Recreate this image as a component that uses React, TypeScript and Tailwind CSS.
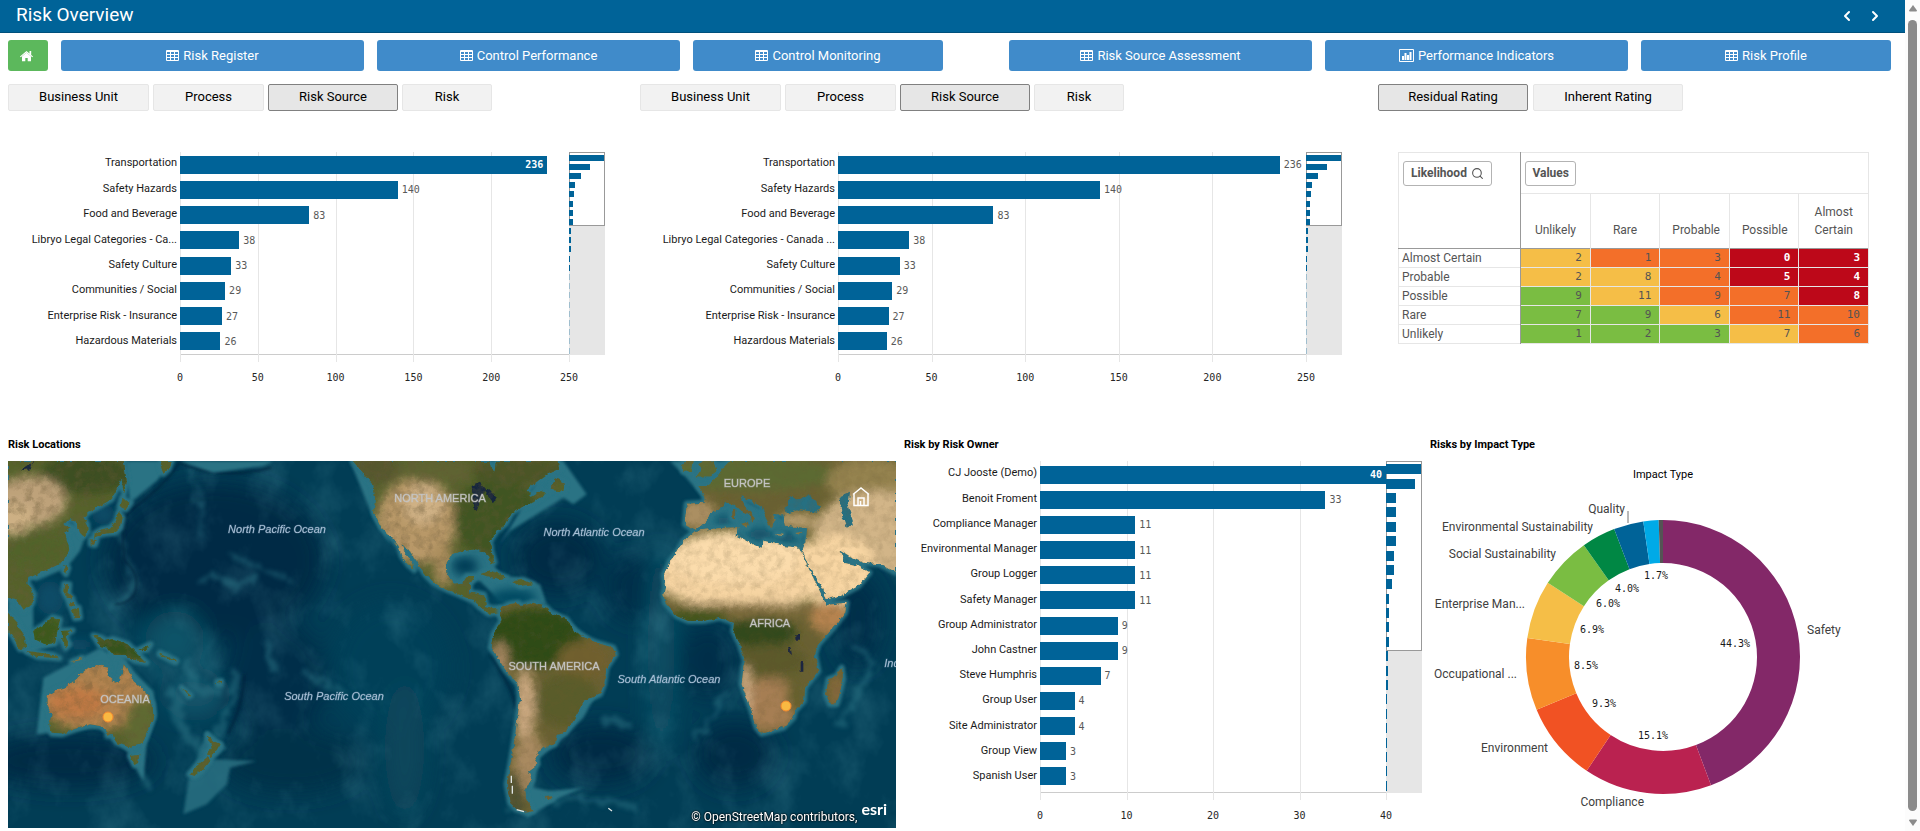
import { ReactNode } from "react";
import { ChevronLeft, ChevronRight, Search } from "lucide-react";

type Datum = { label: string; value: number };

const riskSources: Datum[] = [
  { label: "Transportation", value: 236 },
  { label: "Safety Hazards", value: 140 },
  { label: "Food and Beverage", value: 83 },
  { label: "Libryo Legal Categories - Canada ...", value: 38 },
  { label: "Safety Culture", value: 33 },
  { label: "Communities / Social", value: 29 },
  { label: "Enterprise Risk - Insurance", value: 27 },
  { label: "Hazardous Materials", value: 26 },
];

const riskSourcesShort = riskSources.map((d) =>
  d.value === 38 ? { ...d, label: "Libryo Legal Categories - Ca..." } : d
);

const riskSourceTail = [12, 11, 11, 5, 5, 1, 1, 1, 1, 1, 1, 1, 1, 1];

const owners: Datum[] = [
  { label: "CJ Jooste (Demo)", value: 40 },
  { label: "Benoit Froment", value: 33 },
  { label: "Compliance Manager", value: 11 },
  { label: "Environmental Manager", value: 11 },
  { label: "Group Logger", value: 11 },
  { label: "Safety Manager", value: 11 },
  { label: "Group Administrator", value: 9 },
  { label: "John Castner", value: 9 },
  { label: "Steve Humphris", value: 7 },
  { label: "Group User", value: 4 },
  { label: "Site Administrator", value: 4 },
  { label: "Group View", value: 3 },
  { label: "Spanish User", value: 3 },
];

const ownerTail = [2, 2, 2, 1, 1, 1, 1, 1, 1, 1];

const matrixColumns = ["Unlikely", "Rare", "Probable", "Possible", "Almost Certain"];

const green = "bg-[#7abd42]";
const yellow = "bg-[#f5be47]";
const orange = "bg-[#f36f29]";
const red = "bg-[#bd0819] font-bold text-white";

const matrixRows: { name: string; cells: [number, string][] }[] = [
  { name: "Almost Certain", cells: [[2, yellow], [1, orange], [3, orange], [0, red], [3, red]] },
  { name: "Probable", cells: [[2, yellow], [8, yellow], [4, orange], [5, red], [4, red]] },
  { name: "Possible", cells: [[9, green], [11, yellow], [9, orange], [7, orange], [8, red]] },
  { name: "Rare", cells: [[7, green], [9, green], [6, yellow], [11, orange], [10, orange]] },
  { name: "Unlikely", cells: [[1, green], [2, green], [3, green], [7, yellow], [6, orange]] },
];

const slices = [
  { share: 44.3, color: "#832868" },
  { share: 15.1, color: "#ba2250" },
  { share: 9.3, color: "#f15223" },
  { share: 8.5, color: "#f78e2a" },
  { share: 6.9, color: "#f5be47" },
  { share: 6.1, color: "#7abd42" },
  { share: 4, color: "#008744" },
  { share: 3.5, color: "#006398" },
  { share: 1.8, color: "#00aae7" },
  { share: 0.5, color: "#545454" },
];

function TableIcon() {
  return (
    <svg viewBox="0 0 13 12" className="h-3 w-[13px]" fill="currentColor" aria-hidden="true">
      <path
        fillRule="evenodd"
        d="M1 0h11a1 1 0 0 1 1 1v9a1 1 0 0 1-1 1H1a1 1 0 0 1-1-1V1a1 1 0 0 1 1-1zM1 2v2h3V2zm4 0v2h3V2zm4 0v2h3V2zM1 5v2h3V5zm4 0v2h3V5zm4 0v2h3V5zM1 8v2h3V8zm4 0v2h3V8zm4 0v2h3V8z"
      />
    </svg>
  );
}

function ChartIcon() {
  return (
    <svg viewBox="0 0 15 13" className="h-[13px] w-[15px]" fill="currentColor" aria-hidden="true">
      <path
        fillRule="evenodd"
        d="M1 0h13a1 1 0 0 1 1 1v11a1 1 0 0 1-1 1H1a1 1 0 0 1-1-1V1a1 1 0 0 1 1-1zM1 1v11h13V1zM3 7h2v4H3zM5.500 4h2v7h-2zM8 6h2v5H8zM10.500 3h2v8h-2z"
      />
    </svg>
  );
}

function HomeIcon() {
  return (
    <svg viewBox="0 0 13 12" className="h-3 w-[13px]" fill="currentColor" aria-hidden="true">
      <path d="M6.500 1 13 6.500l-.7.8L6.500 2.500.7 7.300 0 6.500zM9.500 1h1.700v4l-1.700-1.500zM6.500 2.800 11 6.500v4.800H7.700V8H5.300v3.300H2V6.500z" />
    </svg>
  );
}

function NavButton({ icon, children }: { icon?: ReactNode; children: ReactNode }) {
  return (
    <button
      type="button"
      className="flex h-[31px] items-center justify-center gap-1 rounded-[3px] bg-[#408bca] text-[13px] text-white hover:bg-[#3276b1]"
    >
      {icon ?? <TableIcon />}
      <span>{children}</span>
    </button>
  );
}

function Tab({ width, active, children }: { width: string; active?: boolean; children: ReactNode }) {
  return (
    <button
      type="button"
      aria-pressed={!!active}
      className={`h-[27px] rounded-[2px] border pb-0.5 text-[13px] text-black ${width} ${
        active ? "border-[#808080] bg-[#e6e6e6]" : "border-[#e6e6e6] bg-[#f2f2f2]"
      }`}
    >
      {children}
    </button>
  );
}

function DimensionTabs() {
  return (
    <div className="flex gap-1">
      <Tab width="w-[141px]">Business Unit</Tab>
      <Tab width="w-[111px]">Process</Tab>
      <Tab width="w-[130px]" active>
        Risk Source
      </Tab>
      <Tab width="w-[90px]">Risk</Tab>
    </div>
  );
}

function BarChart({
  data,
  tail,
  max,
  step,
  columns,
  height,
  rowsPadding = "",
  windowHeight,
  miniBar,
  insideFrom,
}: {
  data: Datum[];
  tail: number[];
  max: number;
  step: number;
  columns: string;
  height: string;
  rowsPadding?: string;
  windowHeight: string;
  miniBar: string;
  insideFrom: number;
}) {
  const ticks = Array.from({ length: max / step + 1 }, (_, i) => i * step);
  const overview = [...data.map((d) => d.value), ...tail];
  const top = data[0].value;

  return (
    <div className={`grid ${columns}`}>
      <div className={`flex flex-col ${height} ${rowsPadding}`}>
        {data.map((d) => (
          <div
            key={d.label}
            className="flex min-h-0 flex-1 items-center justify-end pr-[3px] pb-0.5 text-[11px] whitespace-nowrap text-[#1a1a1a]"
          >
            {d.label}
          </div>
        ))}
      </div>

      <div className={`relative border-b border-[#ccc] ${height}`}>
        <div className="absolute inset-x-0 top-0 -bottom-2 flex justify-between">
          {ticks.map((t) => (
            <div key={t} className="-mr-px w-px bg-[#e6e6e6]" />
          ))}
        </div>
        <div className={`relative flex h-full flex-col ${rowsPadding}`}>
          {data.map((d) => (
            <div key={d.label} className="flex min-h-0 flex-1 items-center gap-1">
              <div
                className="flex h-[18px] items-center justify-end bg-[#006398] pr-1 font-['DejaVu_Sans_Mono',monospace] text-[10px] font-bold text-white"
                style={{ width: `${(d.value / max) * 100}%` }}
              >
                {d.value >= insideFrom && d.value}
              </div>
              {d.value < insideFrom && (
                <span className="font-['DejaVu_Sans_Mono',monospace] text-[10px] text-[#595959]">
                  {d.value}
                </span>
              )}
            </div>
          ))}
        </div>
      </div>

      <div className={`relative flex flex-col bg-[#e6e6e6] ${height}`}>
        <div className={`absolute inset-x-0 top-0 border border-[#999] bg-white ${windowHeight}`} />
        <div className="relative flex h-full flex-col pt-px">
          {overview.map((v, i) => (
            <div key={i} className="flex min-h-0 flex-1 items-center">
              <div
                className={`min-w-px bg-[#006398] ${miniBar}`}
                style={{ width: `${(v / top) * 96}%`, opacity: v / top < 0.01 ? 0.3 : 1 }}
              />
            </div>
          ))}
        </div>
      </div>

      <div className="col-start-2 mt-[15px] flex justify-between font-['DejaVu_Sans_Mono',monospace] text-[10px] text-[#262626]">
        {ticks.map((t) => (
          <span key={t} className="flex w-0 justify-center">
            {t}
          </span>
        ))}
      </div>
    </div>
  );
}

function RatingMatrix() {
  return (
    <table className="w-full table-fixed border-collapse border border-[#e6e6e6] text-xs text-[#545454]">
      <colgroup>
        <col className="w-[26%]" />
        {matrixColumns.map((c) => (
          <col key={c} />
        ))}
      </colgroup>
      <thead>
        <tr className="h-[41px]">
          <td className="border-r border-r-[#999] pl-1">
            <button
              type="button"
              className="flex h-[25px] w-[89px] items-center justify-center gap-1 rounded-[3px] border border-[#b3b3b3] font-bold"
            >
              Likelihood
              <Search className="size-[13px]" />
            </button>
          </td>
          <td colSpan={5} className="border-b border-[#e6e6e6] pl-1">
            <button
              type="button"
              className="flex h-[25px] w-[51px] items-center justify-center rounded-[3px] border border-[#b3b3b3] font-bold"
            >
              Values
            </button>
          </td>
        </tr>
        <tr className="h-[55px] border-b border-b-[#999]">
          <td className="border-r border-r-[#999]" />
          {matrixColumns.map((c) => (
            <th key={c} scope="col" className="border-r border-r-[#e6e6e6] px-3 pb-[9px] align-bottom leading-[18px] font-normal">
              {c}
            </th>
          ))}
        </tr>
      </thead>
      <tbody>
        {matrixRows.map((row) => (
          <tr key={row.name} className="h-[19px] border-b border-[#e6e6e6]">
            <th scope="row" className="border-r border-r-[#999] p-0 pl-[3px] text-left leading-[18px] font-normal">
              {row.name}
            </th>
            {row.cells.map(([value, tone], i) => (
              <td
                key={i}
                className={`border-r border-[#e6e6e6] p-0 pr-2 text-right font-['DejaVu_Sans_Mono',monospace] text-[11px] leading-[18px] ${tone}`}
              >
                {value}
              </td>
            ))}
          </tr>
        ))}
      </tbody>
    </table>
  );
}

const asia =
  "M24 90H372L368 140 350 175 335 205 300 225 268 242 250 258 262 280 263 302 250 316 240 305 232 285 224 268 208 264 190 282 212 290 196 304 200 328 208 355 195 385 165 405 120 425 100 435 85 440 82 455 102 490 98 515 72 538 60 520 45 503 24 500Z";
const asiaIslands =
  "M372 95L380 150 372 190 366 150ZM485 90H515L505 115 490 128 482 105ZM365 200L392 215 378 235 358 228ZM355 243L368 260 362 290 345 305 318 308 300 312 282 320 284 308 305 295 330 290 348 270ZM272 325L290 328 285 342 272 340ZM195 402L205 410 198 430 190 420ZM192 458L208 460 205 490 218 502 200 500 190 480ZM215 535L236 530 240 560 225 562ZM205 510L222 515 225 528 210 525ZM24 548L50 575 75 620 78 650 60 655 40 620 24 595ZM78 660L120 665 160 672 178 682 110 677ZM100 600L130 582 158 558 180 565 172 600 165 637 135 640 105 625ZM185 600L218 598 202 608 197 618 208 640 197 652 187 630ZM215 692L245 680 240 688ZM280 613L305 620 318 630 340 624 385 640 410 665 440 695 405 690 380 675 345 675 325 650 300 645ZM415 657L452 640 440 657ZM480 665L530 690 526 694 478 670ZM545 770L572 793 566 796ZM652 752L664 750 662 760 653 760Z";
const australia =
  "M140 795L175 775 205 765 235 735 265 710 290 702 325 710 320 735 345 755 360 750 372 698 385 715 400 750 440 785 458 820 460 860 440 910 425 940 385 948 350 935 332 908 322 915 322 898 300 885 270 880 225 895 185 910 155 908 148 880 155 850 140 820ZM390 975L418 972 414 996 403 1002ZM622 910L640 930 662 940 650 960 632 978 620 965 635 950ZM622 978L628 990 605 1020 585 1035 568 1030 590 1005Z";
const northAmerica =
  "M1058 90L1085 120 1120 160 1125 200 1122 245 1145 290 1180 325 1196 345 1205 375 1225 402 1243 417 1236 396 1216 368 1204 343 1225 355 1250 390 1275 430 1300 455 1345 478 1380 492 1420 510 1440 530 1465 548 1495 545 1505 560 1512 545 1500 530 1480 532 1458 525 1452 490 1410 482 1410 460 1425 435 1400 435 1385 455 1360 458 1342 430 1340 395 1355 370 1380 362 1425 355 1450 362 1464 375 1475 400 1484 395 1474 360 1470 330 1490 300 1518 278 1536 245 1560 230 1590 220 1640 185 1620 180 1595 195 1580 178 1600 160 1640 130 1680 112 1675 90H1488L1484 122 1472 112 1468 90ZM1652 176L1665 140 1695 155 1690 182ZM1440 430L1470 418 1520 440 1500 445ZM1540 450L1570 446 1600 460 1560 465Z";
const southAmerica =
  "M150 535L175 520 205 515 215 525 250 515 290 530 305 548 350 565 380 610 440 635 490 650 497 670 470 710 462 760 450 790 400 812 385 840 365 875 345 905 320 912 315 940 280 950 255 975 262 1000 235 1020 245 1045 225 1075 228 1100 250 1140 230 1145 200 1135 180 1115 170 1060 185 980 200 880 210 800 205 760 165 715 140 675 122 650 130 610 155 570 150 550ZM285 1098L308 1096 303 1104 288 1104Z";
const eurasia =
  "M1338 90H840L820 110 800 140 770 165 745 165 762 190 765 215 710 218 705 280 728 296 755 285 775 265 780 245 805 235 830 215 850 218 875 240 900 252 903 275 912 262 905 246 878 218 872 196 895 205 935 228 948 262 962 290 980 270 970 250 1000 250 1008 284 1060 290 1072 292 1066 335 1055 362 1085 420 1120 475 1130 505 1175 492 1225 465 1258 425 1225 405 1185 395 1168 358 1200 378 1240 395 1290 400 1338 425ZM740 136L755 115 745 100 760 90 790 92 800 122 782 136ZM700 90H728L722 120 700 122ZM848 235L856 235 855 265 846 262ZM872 278L898 276 892 290ZM980 306L998 308 996 312 980 310ZM1036 306L1058 302 1046 312Z";
const africa =
  "M700 330L735 300 800 292 862 288 860 315 900 335 935 350 945 330 1000 345 1048 350 1060 380 1090 440 1110 485 1130 522 1190 515 1185 545 1150 590 1105 640 1095 670 1105 720 1065 770 1062 810 1035 840 1030 860 1000 890 935 908 920 890 905 840 875 760 880 710 885 690 870 640 850 600 852 575 810 560 760 570 715 570 680 555 645 515 640 490 645 470 642 430 660 390 680 365ZM1175 710L1180 745 1160 820 1140 820 1128 790 1135 745 1160 735Z";

function Patch({ at, size, color }: { at: [number, number]; size: [number, number]; color: string }) {
  return <ellipse cx={at[0]} cy={at[1]} rx={size[0]} ry={size[1]} fill={color} />;
}

function MapTerrain() {
  return (
    <>
      <defs>
        <filter id="soft" x="-20%" y="-20%" width="140%" height="140%">
          <feGaussianBlur stdDeviation="14" />
        </filter>
        <filter id="shelf" x="-10%" y="-10%" width="120%" height="120%">
          <feGaussianBlur stdDeviation="5" />
        </filter>
        <filter id="ridge" x="-10%" y="-10%" width="120%" height="120%">
          <feTurbulence type="fractalNoise" baseFrequency="0.03" numOctaves="4" seed="2" />
          <feDisplacementMap in="SourceGraphic" scale="50" xChannelSelector="R" yChannelSelector="G" />
          <feGaussianBlur stdDeviation="6" />
        </filter>
        <filter id="deep" x="-30%" y="-30%" width="160%" height="160%">
          <feGaussianBlur stdDeviation="34" />
        </filter>
        <filter id="coast" x="-5%" y="-5%" width="110%" height="110%">
          <feTurbulence type="fractalNoise" baseFrequency="0.06" numOctaves="3" seed="4" />
          <feDisplacementMap in="SourceGraphic" scale="14" xChannelSelector="R" yChannelSelector="G" />
        </filter>
        <filter id="grain" x="0" y="0" width="100%" height="100%">
          <feTurbulence type="fractalNoise" baseFrequency="0.04" numOctaves="5" seed="9" />
          <feColorMatrix values="0 0 0 0 0.14  0 0 0 0 0.1  0 0 0 0 0.04  1.800 1 0 0 -1.150" />
        </filter>
        <filter id="seabed" x="0" y="0" width="100%" height="100%">
          <feTurbulence type="fractalNoise" baseFrequency="0.008 0.006" numOctaves="5" seed="21" />
          <feColorMatrix values="0 0 0 0 0.15  0 0 0 0 0.45  0 0 0 0 0.52  2.400 0 0 0 -1.150" />
        </filter>
        <clipPath id="west-land">
          <path d={asia + asiaIslands + australia + northAmerica} />
        </clipPath>
        <clipPath id="east-land">
          <path d={southAmerica + eurasia + africa} />
        </clipPath>
      </defs>

      <g transform="scale(0.333333)">
        <rect width="2664" height="1101" fill="#013d55" />
        <g filter="url(#deep)">
          <Patch at={[620, 300]} size={[330, 240]} color="#012c45" />
          <Patch at={[800, 660]} size={[160, 180]} color="#012f48" />
          <Patch at={[180, 900]} size={[260, 80]} color="#012c45" />
          <Patch at={[850, 900]} size={[220, 100]} color="#013049" />
          <Patch at={[1650, 290]} size={[130, 110]} color="#012c45" />
          <Patch at={[1880, 380]} size={[90, 100]} color="#012f48" />
          <Patch at={[1780, 880]} size={[150, 90]} color="#012c45" />
          <Patch at={[2100, 600]} size={[90, 110]} color="#012f48" />
          <Patch at={[2180, 880]} size={[120, 100]} color="#012c45" />
          <Patch at={[2550, 480]} size={[70, 140]} color="#012f48" />
          <Patch at={[1150, 620]} size={[180, 200]} color="#024158" />
          <Patch at={[500, 540]} size={[90, 90]} color="#0b5267" />
          <Patch at={[560, 700]} size={[90, 60]} color="#14576c" />
          <Patch at={[1960, 560]} size={[40, 300]} color="#0b4f65" />
          <Patch at={[1190, 860]} size={[60, 200]} color="#07465c" />
        </g>
        <rect width="2664" height="1101" filter="url(#seabed)" opacity="0.2" />
        <g fill="none" stroke="#2a7384" strokeLinecap="round" opacity="0.5" filter="url(#ridge)">
          <path d="M545 20C560 60 575 110 585 220" strokeWidth="7" />
          <path d="M660 280C730 310 790 325 850 360" strokeWidth="9" />
          <path d="M330 200C340 280 380 320 375 380Q350 430 300 440" strokeWidth="16" />
          <path d="M580 360Q640 330 680 375 720 350 740 360" strokeWidth="18" />
          <path d="M490 690C520 740 500 800 570 860" strokeWidth="34" />
          <path d="M540 610C560 690 610 720 640 680" strokeWidth="30" />
          <path d="M680 640C680 720 650 770 620 840" strokeWidth="18" />
          <path d="M380 860Q390 930 420 980" strokeWidth="22" />
          <path d="M890 640L1010 690" strokeWidth="16" />
          <path d="M780 560L800 620" strokeWidth="22" />
          <path d="M2150 700Q2120 780 2060 830" strokeWidth="14" />
          <path d="M2540 560Q2610 580 2580 640L2500 790" strokeWidth="16" />
          <path d="M1500 1040Q1700 990 1880 1040" strokeWidth="14" />
          <path d="M1800 780L1860 790" strokeWidth="30" />
        </g>
        <g fill="none" stroke="#01233a" strokeWidth="7" opacity="0.8" filter="url(#shelf)">
          <path d="M515 5C470 70 420 110 360 155 340 190 345 260 350 300Q400 340 380 400 360 430 320 430" />
          <path d="M515 5Q640 60 790 20" />
          <path d="M708 640C710 700 690 760 660 820" />
          <path d="M1450 580L1510 690 1530 760 1500 1010" />
        </g>

        <g transform="translate(-24 -90)">
          <g fill="#2a7384" filter="url(#shelf)">
            <path d="M375 90H520L470 150 390 215ZM190 270L262 300 240 360 200 410 110 450 80 440 190 370ZM24 490L100 520 100 600 170 640 80 670 24 600Z" />
            <path d="M130 740L300 650 380 700 460 780 470 850 440 940 430 1050 380 960 300 890 110 910ZM320 640L380 690 350 760Z" />
            <path d="M620 900L680 950 640 985 770 990 690 1010 680 1060 620 1120 550 1150 565 1050Z" opacity=".8" />
            <path d="M1050 90L1120 260 1170 340 1140 250 1140 180ZM1340 360H1450L1500 430 1620 460 1640 520 1500 510 1440 450 1350 470Z" />
            <path d="M1690 90L1760 190 1720 220 1690 200 1530 300 1500 340 1560 240 1640 100ZM540 90L640 125 790 105 820 90Z" />
          </g>
          <g filter="url(#soft)">
            <Patch at={[1395, 405]} size={[38, 28]} color="#013d57" />
            <Patch at={[1540, 500]} size={[70, 26]} color="#024a62" />
            <Patch at={[310, 250]} size={[34, 30]} color="#0c4c66" />
            <Patch at={[150, 500]} size={[40, 50]} color="#0c4c66" />
            <Patch at={[240, 640]} size={[40, 14]} color="#0c4c66" />
          </g>
          <g fill="none" stroke="#2a7384" strokeWidth="18" strokeLinejoin="round" filter="url(#shelf)">
            <path d={asia + asiaIslands + australia + northAmerica} />
          </g>
          <g filter="url(#coast)">
            <g clipPath="url(#west-land)">
              <rect x="0" y="60" width="1800" height="1000" fill="#56622c" />
              <g filter="url(#soft)">
                <Patch at={[260, 130]} size={[140, 60]} color="#3d5020" />
                <Patch at={[90, 210]} size={[110, 75]} color="#bea27a" />
                <Patch at={[40, 260]} size={[60, 50]} color="#cdb084" />
                <Patch at={[120, 360]} size={[110, 60]} color="#51632c" />
                <Patch at={[135, 605]} size={[60, 50]} color="#3b5a1e" />
                <Patch at={[360, 655]} size={[90, 40]} color="#34521a" />
                <Patch at={[280, 790]} size={[170, 110]} color="#b1834f" />
                <Patch at={[230, 815]} size={[90, 50]} color="#c07a45" />
                <Patch at={[420, 890]} size={[45, 90]} color="#5f6a33" />
                <Patch at={[1250, 270]} size={[120, 130]} color="#b89868" />
                <Patch at={[1270, 220]} size={[60, 60]} color="#cfb185" />
                <Patch at={[1330, 400]} size={[30, 70]} color="#a98c5b" />
                <Patch at={[1130, 110]} size={[70, 50]} color="#56582f" />
                <Patch at={[1310, 120]} size={[120, 36]} color="#5f6533" />
                <Patch at={[1490, 260]} size={[130, 120]} color="#405522" />
                <Patch at={[1560, 120]} size={[150, 40]} color="#4b5528" />
              </g>
              <path d="M1415 165L1440 155 1455 175 1430 240 1420 230ZM1450 180L1480 215 1490 200 1465 175ZM60 120L100 92 90 115Z" fill="#15263d" />
              <rect x="0" y="60" width="1800" height="1000" filter="url(#grain)" opacity="0.4" />
            </g>
          </g>
        </g>

        <g transform="translate(1326 -90)">
          <g fill="#2a7384" filter="url(#shelf)">
            <path d="M460 750L400 860 330 930 270 980 250 1070 300 1080 400 1070 330 1100 230 1160 220 1020 300 900Z" />
            <path d="M660 90H860L790 160 760 200 700 130ZM720 290L790 240 860 200 1060 290 1060 360 930 370 860 300ZM1160 340L1240 400 1200 400Z" />
            <path d="M300 530L420 620 380 630ZM1170 180H1220V295H1170ZM1000 180H1120V250H1000Z" />
          </g>
          <g filter="url(#soft)">
            <Patch at={[820, 270]} size={[20, 16]} color="#0a4660" />
            <Patch at={[930, 310]} size={[40, 14]} color="#0a4660" />
            <Patch at={[1010, 320]} size={[34, 12]} color="#0a4660" />
          </g>
          <g fill="none" stroke="#2a7384" strokeWidth="18" strokeLinejoin="round" filter="url(#shelf)">
            <path d={southAmerica + eurasia + africa} />
          </g>
          <g filter="url(#coast)">
            <g clipPath="url(#east-land)">
              <rect x="60" y="60" width="1400" height="1140" fill="#6a6232" />
              <g filter="url(#soft)">
                <Patch at={[250, 620]} size={[150, 90]} color="#2f4b19" />
                <Patch at={[400, 690]} size={[80, 60]} color="#71602f" />
                <Patch at={[350, 810]} size={[100, 80]} color="#5a5c29" />
                <Patch at={[225, 830]} size={[30, 120]} color="#cba880" />
                <Patch at={[150, 690]} size={[25, 60]} color="#a68660" />
                <Patch at={[240, 1000]} size={[50, 90]} color="#a98a60" />
                <Patch at={[195, 1100]} size={[25, 80]} color="#4d5131" />
                <Patch at={[900, 130]} size={[260, 50]} color="#5c6a32" />
                <Patch at={[740, 250]} size={[60, 45]} color="#ab8f62" />
                <Patch at={[1260, 150]} size={[130, 70]} color="#95834f" />
                <Patch at={[1280, 310]} size={[190, 130]} color="#d2b588" />
                <Patch at={[1040, 270]} size={[60, 25]} color="#b99f70" />
                <Patch at={[880, 420]} size={[290, 115]} color="#f6d4a2" />
                <Patch at={[860, 380]} size={[210, 80]} color="#fbdcac" />
                <Patch at={[1160, 420]} size={[120, 110]} color="#f8d6a3" />
                <Patch at={[860, 540]} size={[240, 24]} color="#7f6d3c" />
                <Patch at={[730, 560]} size={[110, 25]} color="#3f541f" />
                <Patch at={[930, 605]} size={[110, 45]} color="#30491a" />
                <Patch at={[960, 690]} size={[110, 50]} color="#5c5a2b" />
                <Patch at={[1140, 560]} size={[60, 50]} color="#b58350" />
                <Patch at={[960, 820]} size={[90, 80]} color="#a67e52" />
                <Patch at={[885, 780]} size={[20, 80]} color="#d0ac83" />
                <Patch at={[1040, 790]} size={[30, 60]} color="#66622f" />
                <Patch at={[1160, 780]} size={[20, 50]} color="#8a6a3d" />
              </g>
              <path d="M1005 240L1020 195 1040 205 1055 205 1075 190 1110 225 1100 245 1050 235 1010 248ZM1168 195L1200 182 1195 230 1212 280 1190 290 1175 250Z" fill="#277082" />
              <path d="M1036 612H1050V626H1036ZM1014 645L1022 650 1026 672 1018 665ZM1052 690H1060V722H1052Z" fill="#1b2540" />
              <rect x="60" y="60" width="1400" height="1140" filter="url(#grain)" opacity="0.2" />
            </g>
          </g>
          <path d="M184 1034V1056M187 1064V1088M200 1136L222 1142M475 1132L486 1140" stroke="#dfe5e4" strokeWidth="4" fill="none" />
        </g>
      </g>
    </>
  );
}

const oceans: [string, number, number][] = [
  ["North Pacific Ocean", 269, 72],
  ["South Pacific Ocean", 326, 239],
  ["North Atlantic Ocean", 586, 75],
  ["South Atlantic Ocean", 661, 222],
  ["Indian Ocean", 909, 206],
];

const continents: [string, number, number][] = [
  ["NORTH AMERICA", 432, 41],
  ["SOUTH AMERICA", 546, 209],
  ["EUROPE", 739, 26],
  ["AFRICA", 762, 166],
  ["OCEANIA", 117, 242],
];

function RiskMap() {
  return (
    <div className="relative h-[367px] overflow-hidden bg-[#013d55]">
      <svg viewBox="0 0 888 367" preserveAspectRatio="xMidYMid slice" className="h-full w-full" role="img" aria-label="Risk locations map">
        <MapTerrain />
        <g textAnchor="middle" className="font-['Liberation_Sans',Arial,sans-serif] text-[11px]">
          {oceans.map(([name, x, y]) => (
            <text key={name} x={x} y={y} className="fill-[#a9c0d6] italic" stroke="#a9c0d640">
              {name}
            </text>
          ))}
          {continents.map(([name, x, y]) => (
            <text key={name} x={x} y={y} className="fill-[#c4c4c4]" stroke="#c4c4c460">
              {name}
            </text>
          ))}
        </g>
        <circle cx="100" cy="256" r="5" fill="#f9b942" stroke="#f58a2e" />
        <circle cx="778" cy="245" r="5" fill="#f9b942" stroke="#f58a2e" />
      </svg>
      <button type="button" aria-label="Reset map view" className="absolute top-[26px] right-[26px] text-white">
        <svg viewBox="0 0 18 20" className="h-5 w-[18px]" fill="none" stroke="currentColor" strokeWidth="1.500">
          <path d="M1 7.500 9 1l8 6.500M2 7v11.500h14V7M6 18.500V11h6v7.500M8.500 18v-4" />
        </svg>
      </button>
      <div className="absolute right-[9px] bottom-[3px] flex items-end gap-1 text-white">
        <span className="text-xs [text-shadow:0_0_2px_#000,0_0_2px_#000]">© OpenStreetMap contributors,</span>
        <span className="pb-[6px] font-[Lato,sans-serif] text-base leading-5 font-bold">esri</span>
      </div>
    </div>
  );
}

const impactLabels: [string, number, number, "start" | "end"][] = [
  ["Safety", 377, 173, "start"],
  ["Compliance", 214, 345, "end"],
  ["Environment", 118, 291, "end"],
  ["Occupational ...", 87, 217, "end"],
  ["Enterprise Man...", 95, 147, "end"],
  ["Social Sustainability", 126, 97, "end"],
  ["Environmental Sustainability", 163, 70, "end"],
  ["Quality", 195, 52, "end"],
];

const impactShares: [string, number, number][] = [
  ["44.3%", 305, 186],
  ["15.1%", 223, 278],
  ["9.3%", 174, 246],
  ["8.5%", 156, 208],
  ["6.9%", 162, 172],
  ["6.0%", 178, 146],
  ["4.0%", 197, 131],
  ["1.7%", 226, 118],
];

function point(share: number, r: number) {
  const a = (share / 100) * Math.PI * 2;
  return `${233 + r * Math.sin(a)} ${196 - r * Math.cos(a)}`;
}

function ImpactDonut() {
  let start = 0;
  return (
    <svg viewBox="0 0 461 367" className="w-full" role="img" aria-label="Risks by impact type">
      {slices.map(({ share, color }) => {
        const from = start;
        start += share;
        return (
          <path
            key={color}
            d={`M${point(from, 137)}A137 137 0 0 1 ${point(start, 137)}L${point(start, 94)}A94 94 0 0 0 ${point(from, 94)}Z`}
            fill={color}
          />
        );
      })}
      <path d="M198 50v12" stroke="#737373" />
      <text x="233" y="17" textAnchor="middle" className="fill-black text-[11px]">
        Impact Type
      </text>
      <g className="fill-[#404040] text-xs">
        {impactLabels.map(([name, x, y, anchor]) => (
          <text key={name} x={x} y={y} textAnchor={anchor}>
            {name}
          </text>
        ))}
      </g>
      <g className="fill-[#1a1a1a] font-['DejaVu_Sans_Mono',monospace] text-[10px]" textAnchor="middle">
        {impactShares.map(([share, x, y]) => (
          <text key={share} x={x} y={y}>
            {share}
          </text>
        ))}
      </g>
    </svg>
  );
}

function Panel({ title, children }: { title: string; children: ReactNode }) {
  return (
    <section>
      <h2 className="mb-2 text-[11px] leading-4 font-bold text-black">{title}</h2>
      {children}
    </section>
  );
}

export default function App() {
  return (
    <div className="flex min-h-screen bg-white font-[Roboto,sans-serif]">
      <main className="min-w-0 flex-1">
        <header className="flex h-[33px] items-center justify-between border-b border-[#00507c] bg-[#006398] pr-[22px] pl-4 text-white">
          <h1 className="pb-0.5 text-[19px] leading-6">Risk Overview</h1>
          <div className="flex gap-3">
            <button type="button" aria-label="Previous sheet">
              <ChevronLeft className="size-4" strokeWidth={3} />
            </button>
            <button type="button" aria-label="Next sheet">
              <ChevronRight className="size-4" strokeWidth={3} />
            </button>
          </div>
        </header>

        <div className="pt-[7px] pr-[14px] pl-2">
          <nav className="grid grid-cols-[40px_303fr_303fr_250fr_40px_303fr_303fr_250fr] gap-[13px]">
            <button
              type="button"
              aria-label="Home"
              className="flex h-[31px] items-center justify-center rounded-[3px] bg-[#5cb85c] pr-1 text-white"
            >
              <HomeIcon />
            </button>
            <NavButton>Risk Register</NavButton>
            <NavButton>Control Performance</NavButton>
            <NavButton>Control Monitoring</NavButton>
            <span />
            <NavButton>Risk Source Assessment</NavButton>
            <NavButton icon={<ChartIcon />}>Performance Indicators</NavButton>
            <NavButton>Risk Profile</NavButton>
          </nav>

          <div className="mt-[13px] grid grid-cols-[632fr_738fr_513fr]">
            <section className="flex flex-col gap-[41px]">
              <DimensionTabs />
              <BarChart
                data={riskSourcesShort}
                tail={riskSourceTail}
                max={250}
                step={50}
                columns="grid-cols-[172px_1fr_36px] pr-[35px]"
                height="h-[203px]"
                windowHeight="h-[74px]"
                miniBar="h-[6px]"
                insideFrom={200}
              />
            </section>
            <section className="flex flex-col gap-[41px]">
              <DimensionTabs />
              <BarChart
                data={riskSources}
                tail={riskSourceTail}
                max={250}
                step={50}
                columns="grid-cols-[198px_1fr_36px] pr-9"
                height="h-[203px]"
                windowHeight="h-[74px]"
                miniBar="h-[6px]"
                insideFrom={999}
              />
            </section>
            <section className="flex flex-col gap-[41px]">
              <div className="flex gap-[5px]">
                <Tab width="w-[150px]" active>
                  Residual Rating
                </Tab>
                <Tab width="w-[150px]">Inherent Rating</Tab>
              </div>
              <div className="pr-[22px] pl-5">
                <RatingMatrix />
              </div>
            </section>
          </div>

          <div className="mt-[52px] grid grid-cols-[888fr_518fr_461fr] gap-2">
            <Panel title="Risk Locations">
              <RiskMap />
            </Panel>
            <Panel title="Risk by Risk Owner">
              <BarChart
                data={owners}
                tail={ownerTail}
                max={40}
                step={10}
                columns="grid-cols-[136px_1fr_36px]"
                height="h-[332px]"
                rowsPadding="pt-px pb-[3px]"
                windowHeight="h-[190px]"
                miniBar="h-[10px]"
                insideFrom={40}
              />
            </Panel>
            <Panel title="Risks by Impact Type">
              <ImpactDonut />
            </Panel>
          </div>
        </div>
      </main>

      <div className="flex w-[15px] flex-col items-center bg-[#fcfcfc] py-1 text-[#8b8b8b]" aria-hidden="true">
        <svg viewBox="0 0 10 8" className="h-2 w-[10px]" fill="currentColor">
          <path d="M5 1l4 5.500a1 1 0 0 1-1 1H2a1 1 0 0 1-1-1z" />
        </svg>
        <div className="my-2 w-[9px] flex-1 rounded-full bg-[#8b8b8b]" />
        <svg viewBox="0 0 10 8" className="h-2 w-[10px]" fill="currentColor">
          <path d="M5 7L1 1.500a1 1 0 0 1 1-1h6a1 1 0 0 1 1 1z" />
        </svg>
      </div>
    </div>
  );
}
